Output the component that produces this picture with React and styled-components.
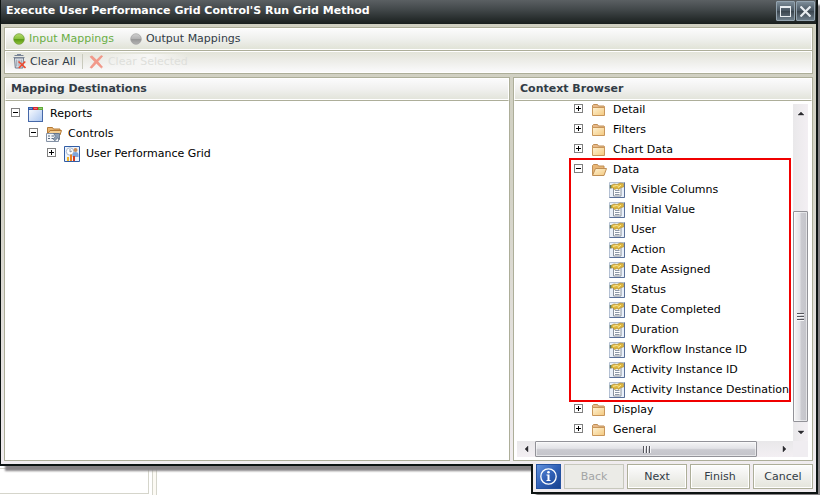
import React from "react";
import styled, { createGlobalStyle, css } from "styled-components";

const GlobalStyle = createGlobalStyle`
  *, *::before, *::after { box-sizing: border-box; }
  html, body { margin: 0; padding: 0; background: #fff; }
  body, button { font-family: "DejaVu Sans", Verdana, sans-serif; font-size: 11px; line-height: 16px; }
  button { margin: 0; padding: 0; border: 0; background: none; color: inherit; cursor: pointer; }
  svg { display: block; flex: none; }
`;

const line = "#adae99";
const ink = "#323c46";

const Page = styled.div`
  display: flex;
  flex-direction: column;
  height: 100vh;
  min-height: 420px;
  padding: 0 2px 1px 0;
  overflow: hidden;
`;

const Dialog = styled.main`
  flex: 1;
  min-height: 0;
  display: flex;
  flex-direction: column;
  border: solid #0c1312;
  border-width: 0 2px 2px 1px;
  background: linear-gradient(#cfcfc0, #d3d2c6 40%, #f0ecef);
  box-shadow: 5px 5px 2px #858284;
  z-index: 1;
`;

const TitleBar = styled.header`
  display: flex;
  align-items: center;
  gap: 1px;
  height: 24px;
  padding: 0 1px 2px 5px;
  background: linear-gradient(#5b6063, #42484a 40%, #191f1e);
`;

const Title = styled.h1`
  flex: 1;
  margin: 0;
  color: #fff;
  font-size: 11px;
  line-height: 16px;
  font-weight: bold;
  white-space: nowrap;
`;

const WindowButton = styled.button`
  display: grid;
  place-items: center;
  width: 19px;
  height: 20px;
  border: 1px solid #93a3af;
  border-radius: 1px;
  background: linear-gradient(#7c8c98, #46535e 50%, #3a454e 52%, #6e7e8a);
`;

const Body = styled.div`
  flex: 1;
  min-height: 0;
  display: flex;
  flex-direction: column;
  gap: 3px;
  padding: 3px;
`;

const Toolbars = styled.div`
  border: 1px solid ${line};
`;

const Toolbar = styled.div`
  display: flex;
  align-items: center;
  height: 22px;
  padding: 0 7px 1px;
  color: ${ink};
  border: 1px solid #fff;
  background: ${(p) => (p.$lower ? "linear-gradient(#e3e4d9, #eeeeea 50%, #fafafb)" : "linear-gradient(#fbfbfc, #eff0ed 50%, #e1e3d7)")};
  ${(p) => p.$lower && css`
    margin-top: 1px;
    box-shadow: 0 -1px ${line};
  `}
`;

const ToolButton = styled.button`
  display: flex;
  align-items: center;
  gap: 4px;
  margin-right: ${(p) => p.$after || 0}px;
  color: ${(p) => (p.$active ? "#6aae45" : ink)};
  white-space: nowrap;
  &:disabled { color: #dedfdb; background: linear-gradient(90deg, #f5f5f300, #f6f6f5 60%, #f5f5f300); cursor: default; }
`;

const Divider = styled.span`
  width: 1px;
  height: 15px;
  margin-right: 6px;
  background: #c9cabd;
`;

const Panels = styled.div`
  flex: 1;
  min-height: 0;
  display: grid;
  grid-template-columns: minmax(0, 1fr) 300px;
  gap: 3px;
`;

const Panel = styled.section`
  display: flex;
  flex-direction: column;
  min-width: 0;
  min-height: 0;
  border: 1px solid ${line};
  background: #fff;
`;

const PanelTitle = styled.h2`
  margin: 0;
  height: 23px;
  padding: 2px 5px;
  border: 1px solid #fff;
  box-shadow: inset 0 -1px #fff;
  border-bottom-color: ${line};
  background: linear-gradient(#fbfbfc, #f0f0ee 50%, #e1e3d9);
  color: ${ink};
  font-size: 11px;
  line-height: 16px;
  font-weight: bold;
`;

const Tree = styled.div`
  padding: ${(p) => (p.$scrolled ? 0 : 3)}px 0;
  margin-top: ${(p) => (p.$scrolled ? -4 : 0)}px;
`;

const Row = styled.div`
  display: flex;
  align-items: center;
  height: 20px;
  padding-left: ${(p) => p.$indent}px;
  white-space: nowrap;
  color: #000;
`;

const Toggle = styled.button`
  display: block;
  width: 9px;
  height: 12px;
  margin-right: 8px;
  padding-bottom: 3px;
`;

const Label = styled.span`
  padding-left: 6px;
`;

const Highlight = styled.div`
  margin: 0 4px 0 54px;
  outline: 2px solid #f00000;
  overflow: hidden;
`;

const ScrollArea = styled.div`
  flex: 1;
  min-height: 0;
  display: grid;
  grid-template: minmax(0, 1fr) 16px / minmax(0, 1fr) 15px;
  padding: 3px 4px 3px 3px;
`;

const Viewport = styled.div`
  overflow: hidden;
`;

const ScrollBar = styled.div`
  display: flex;
  flex-direction: ${(p) => (p.$vertical ? "column" : "row")};
  background: ${(p) => (p.$vertical ? "linear-gradient(90deg, #e9e8ea, #f3eff3)" : "linear-gradient(#e9e8ea, #f3eff3)")};
`;

const Arrow = styled.button`
  display: grid;
  place-items: center;
  flex: 0 0 17px;
`;

const Track = styled.span`
  flex: ${(p) => p.$part} 1 0;
`;

const Thumb = styled.span`
  flex: ${(p) => p.$part} 1 0;
  display: grid;
  place-items: center;
  border: 1px solid #929298;
  border-radius: 1px;
  box-shadow: inset 0 0 0 1px #ffffff88;
  background: linear-gradient(${(p) => (p.$vertical ? "90deg" : "180deg")}, #f4f4f5, #e3e3e7 45%, #cacad0 55%, #c4c4ca);
`;

const Corner = styled.span`
  background: #f0edf1;
`;

const BottomRow = styled.div`
  display: flex;
  align-items: stretch;
`;

const BackPane = styled.div`
  width: 149px;
  margin: 2px 3px 0 0;
  border: solid #d5d5cb;
  border-width: 1px 1px 1px 0;
`;

const BackSplitter = styled.div`
  width: 5px;
  margin-bottom: -1px;
  border: solid #d5d5cb;
  border-width: 0 1px;
  background: #fcfaf4;
`;

const Footer = styled.footer`
  display: flex;
  gap: 3px;
  margin: -2px 0 0 auto;
  padding: 0 3px 3px;
  border: solid #0c1312;
  border-width: 0 2px 2px;
  background: #f0ecef;
  box-shadow: 5px 5px 2px #858284;
  z-index: 2;
`;

const FooterButton = styled.button`
  width: 60px;
  height: 25px;
  border: 1px solid ${line};
  background: linear-gradient(#fdfdfd, #f0f0ed 50%, #e4e5db);
  box-shadow: inset 0 0 0 1px #fff;
  color: ${ink};
  &:disabled { color: #a2a4a5; background: #ebebe7; border-color: #c7c8bd; box-shadow: none; cursor: default; }
`;

const InfoButton = styled.button`
  display: grid;
  place-items: center;
  width: 25px;
  height: 25px;
  border: 1px solid #2452a0;
  background: linear-gradient(135deg, #6392dc, #3060b6 50%, #18428f);
`;

const Dot = ({ on }) => {
  const id = on ? "dot-on" : "dot-off";
  return (
    <svg width="12" height="12" viewBox="0 0 12 12">
      <defs>
        <linearGradient id={id} x2="0" y2="1">
          <stop offset="0" stopColor={on ? "#b4d96b" : "#d0d0d0"} />
          <stop offset=".45" stopColor={on ? "#8cc440" : "#b4b4b4"} />
          <stop offset=".55" stopColor={on ? "#5b9a15" : "#979797"} />
          <stop offset="1" stopColor={on ? "#92c43a" : "#b4b4b4"} />
        </linearGradient>
      </defs>
      <circle cx="6" cy="6" r="5.3" fill={`url(#${id})`} stroke={on ? "#6a9b34" : "#a0a0a0"} strokeWidth=".7" />
    </svg>
  );
};

const TrashIcon = () => (
  <svg width="13" height="15" viewBox="0 0 13 15">
    <path d="M1.500 4h9l-.600 10H2.300z" fill="#e5e9ee" stroke="#6e798a" />
    <path d="M3.800 5.500v7M6 5.500v7M8.200 5.500v7" stroke="#8c97a7" />
    <path d="M.5 3.500h11M1.500 1.500h9M4 .500h4" stroke="#7a8597" />
    <path d="M5.500 7.500l7 6.500M12.300 7.500l-6.500 6.500" stroke="#ee4a30" strokeWidth="1.600" />
  </svg>
);

const CrossIcon = () => (
  <svg width="15" height="14" viewBox="0 0 15 14">
    <path d="M1 1.8L3 .8l4.5 4.3L12 .6l1.700.600L9 6.600l4.600 5.500-1.300 1L7.400 8.300 2.800 13.200 1 12.400l4.700-5.700z" fill="#f29a8b" stroke="#ee8a79" strokeWidth=".5" />
  </svg>
);

const Sign = ({ open }) => (
  <svg width="9" height="9" viewBox="0 0 9 9" shapeRendering="crispEdges">
    <rect x=".5" y=".5" width="8" height="8" fill="#fff" stroke="#808080" />
    <path d={open ? "M2 4.5h5" : "M2 4.5h5M4.5 2v5"} stroke="#000" />
  </svg>
);

const ReportsIcon = () => (
  <svg width="16" height="16" viewBox="0 0 16 16">
    <defs>
      <linearGradient id="sheet" x2="1" y2="1">
        <stop offset="0" stopColor="#fff" />
        <stop offset="1" stopColor="#a9c5f0" />
      </linearGradient>
    </defs>
    <rect x=".5" y="1.500" width="14" height="14" fill="url(#sheet)" stroke="#4668a8" />
    <path d="M0 1h5v3H0z" fill="#2d5aa8" />
    <path d="M5 1h5v3H5z" fill="#d8242c" />
    <path d="M10 1h5v3h-5z" fill="#5eaa35" />
    <path d="M1 2.500h3M6 2.500h3M11 2.500h3" stroke="#fff" strokeOpacity=".35" />
  </svg>
);

const ControlsIcon = () => (
  <svg width="16" height="16" viewBox="0 0 16 16">
    <path d="M1.500 12V1.500h5l1 1.500H14v3" fill="#e9b570" stroke="#b47a36" />
    <path d="M1.500 8L4 4.500h11.500L14 9" fill="#f5cf92" stroke="#b47a36" />
    <path d="M.5 7.500h12v8H.5z" fill="#f4f6f9" stroke="#8492a6" />
    <path d="M2 10h2M2 12.500h2M5.500 10h3M5.500 12.500h2" stroke="#56687f" strokeWidth="1.200" />
    <path d="M7.500 7.500h6v6l-2-1.600-2.600 2.900-1.700-1.700 2.600-2.800z" fill="#8ea0b6" stroke="#5c6c82" strokeWidth=".8" />
  </svg>
);

const GridIcon = () => (
  <svg width="16" height="16" viewBox="0 0 16 16">
    <path d="M.5.5h15v15H.5z" fill="#edf3fc" stroke="#315da5" />
    <circle cx="6" cy="5.500" r="3.700" fill="#fff" stroke="#a9b9cf" />
    <path d="M6 3v3l2-1" fill="none" stroke="#6b7d99" strokeWidth=".8" />
    <circle cx="11.500" cy="4" r="2" fill="#c98d59" />
    <path d="M8.500 9q0-3 3-3t3 3v2h-6z" fill="#7fa6dd" />
    <path d="M3 11h2v4H3z" fill="#f0b429" />
    <path d="M6 8.500h2V15H6z" fill="#e98023" />
    <path d="M9 10h2v5H9z" fill="#d33c21" />
  </svg>
);

const FolderIcon = ({ open }) => (
  <svg width="16" height="16" viewBox="0 0 16 16">
    <defs>
      <linearGradient id="folder" x2="1" y2="1">
        <stop offset="0" stopColor="#fff3d4" />
        <stop offset="1" stopColor="#f3c87e" />
      </linearGradient>
    </defs>
    {open ? (
      <>
        <path d="M1.500 13V3.500l1-1h4l1 1.500h5.500v4" fill="#e9b777" stroke="#c08f55" />
        <path d="M1.500 13.500L4.500 6.500h11l-2.500 7z" fill="url(#folder)" stroke="#c08f55" />
      </>
    ) : (
      <>
        <path d="M1.500 12.500v-9l1-1h4l1 1.500H13l.5.5v8z" fill="#e7b98a" stroke="#c08f55" />
        <path d="M1.500 5.500h12v8h-12z" fill="url(#folder)" stroke="#c9965a" />
      </>
    )}
  </svg>
);

const PropertyIcon = () => (
  <svg width="16" height="16" viewBox="0 0 16 16">
    <path d="M.5.500h15v15H.5z" fill="#eaf0f9" stroke="#b4c0d3" />
    <path d="M.5 15.500h15V.5" fill="none" stroke="#5a7099" />
    <path d="M4.500 5.500h7.500v8.500h-7.500z" fill="#fdfdfe" stroke="#8a929e" />
    <path d="M6 8.500h4.500M6 10.500h4.500M6 12.500h4.500" stroke="#707d92" strokeWidth=".8" />
    <path d="M2 3.500L5 2l3 .500L11 1l3.500.500V5l-2.500.500-2 2L8 6.500 5.500 7.500 4 5.800 2 6z" fill="#dcb540" stroke="#a5842c" strokeWidth=".6" />
    <path d="M4 4.300l3.500-.800 2 .500M9 5.500l3-2.300" fill="none" stroke="#fff0a0" strokeWidth=".9" />
    <path d="M1.500 3v3.500" stroke="#5c7d58" strokeWidth="1.400" />
  </svg>
);

const arrowPaths = {
  up: "M1 6l3-3 3 3z",
  down: "M1 2h6L4 5z",
  left: "M6 1v6L3 4z",
  right: "M2 1l3 3-3 3z",
};

const ArrowIcon = ({ to }) => (
  <svg width="8" height="8" viewBox="0 0 8 8">
    <path d={arrowPaths[to]} fill="#2c2c30" stroke="#2c2c30" strokeWidth=".4" />
  </svg>
);

const GripIcon = ({ vertical }) => (
  <svg width="9" height="9" viewBox="0 0 9 9" shapeRendering="crispEdges">
    <path d={vertical ? "M1 1.500h7M1 4.500h7M1 7.500h7" : "M1.500 1v7M4.500 1v7M7.500 1v7"} stroke="#55555c" />
    <path d={vertical ? "M1 2.500h7M1 5.500h7M1 8.500h7" : "M2.500 1v7M5.500 1v7M8.500 1v7"} stroke="#f6f6f8" />
  </svg>
);

const Scroll = ({ vertical, before, thumb, after }) => (
  <ScrollBar $vertical={vertical}>
    <Arrow aria-label={vertical ? "Scroll up" : "Scroll left"}><ArrowIcon to={vertical ? "up" : "left"} /></Arrow>
    <Track $part={before} />
    <Thumb $part={thumb} $vertical={vertical}><GripIcon vertical={vertical} /></Thumb>
    <Track $part={after} />
    <Arrow aria-label={vertical ? "Scroll down" : "Scroll right"}><ArrowIcon to={vertical ? "down" : "right"} /></Arrow>
  </ScrollBar>
);

const Node = ({ indent, open, leaf, icon, children }) => (
  <Row $indent={indent} role="treeitem" aria-expanded={leaf ? undefined : Boolean(open)}>
    {!leaf && (
      <Toggle aria-label={`${open ? "Collapse" : "Expand"} ${children}`}><Sign open={open} /></Toggle>
    )}
    {icon}
    <Label>{children}</Label>
  </Row>
);

const fields = [
  "Visible Columns", "Initial Value", "User", "Action", "Date Assigned", "Status",
  "Date Completed", "Duration", "Workflow Instance ID", "Activity Instance ID",
  "Activity Instance Destination",
];

export default function App() {
  return (
    <Page>
      <GlobalStyle />
      <Dialog>
        <TitleBar>
          <Title>Execute User Performance Grid Control'S Run Grid Method</Title>
          <WindowButton aria-label="Maximize">
            <svg width="11" height="11" viewBox="0 0 11 11" shapeRendering="crispEdges">
              <path d="M.5 1h10v9.500H.5z" fill="none" stroke="#e8edf0" />
              <path d="M0 1h11" stroke="#e8edf0" strokeWidth="2" />
            </svg>
          </WindowButton>
          <WindowButton aria-label="Close">
            <svg width="11" height="11" viewBox="0 0 11 11">
              <path d="M.5.500l10 10M10.500.500l-10 10" stroke="#e8edf0" strokeWidth="2.200" />
            </svg>
          </WindowButton>
        </TitleBar>
        <Body>
          <Toolbars>
            <Toolbar>
              <ToolButton $active $after={16}><Dot on />Input Mappings</ToolButton>
              <ToolButton><Dot />Output Mappings</ToolButton>
            </Toolbar>
            <Toolbar $lower>
              <ToolButton $after={6}><TrashIcon />Clear All</ToolButton>
              <Divider />
              <ToolButton disabled><CrossIcon />Clear Selected</ToolButton>
            </Toolbar>
          </Toolbars>
          <Panels>
            <Panel>
              <PanelTitle>Mapping Destinations</PanelTitle>
              <Tree role="tree">
                <Node indent={6} open icon={<ReportsIcon />}>Reports</Node>
                <Node indent={24} open icon={<ControlsIcon />}>Controls</Node>
                <Node indent={42} icon={<GridIcon />}>User Performance Grid</Node>
              </Tree>
            </Panel>
            <Panel>
              <PanelTitle>Context Browser</PanelTitle>
              <ScrollArea>
                <Viewport>
                  <Tree role="tree" $scrolled>
                    {["Detail", "Filters", "Chart Data"].map((name) => (
                      <Node key={name} indent={57} icon={<FolderIcon />}>{name}</Node>
                    ))}
                    <Highlight>
                      <Node indent={3} open icon={<FolderIcon open />}>Data</Node>
                      {fields.map((name) => (
                        <Node key={name} indent={38} leaf icon={<PropertyIcon />}>{name}</Node>
                      ))}
                    </Highlight>
                    {["Display", "General"].map((name) => (
                      <Node key={name} indent={57} icon={<FolderIcon />}>{name}</Node>
                    ))}
                  </Tree>
                </Viewport>
                <Scroll vertical before={91} thumb={210} after={2} />
                <Scroll before={1} thumb={222} after={19} />
                <Corner />
              </ScrollArea>
            </Panel>
          </Panels>
        </Body>
      </Dialog>
      <BottomRow>
        <BackPane />
        <BackSplitter />
        <Footer>
          <InfoButton aria-label="Information">
            <svg width="19" height="19" viewBox="0 0 19 19">
              <circle cx="9.500" cy="9.500" r="7.700" fill="none" stroke="#fff" strokeWidth="1.300" />
              <circle cx="9.500" cy="5.300" r="1.300" fill="#fff" />
              <path d="M7.500 7.500h3V13h1v1h-4v-1h1V8.500h-1z" fill="#fff" />
            </svg>
          </InfoButton>
          <FooterButton disabled>Back</FooterButton>
          <FooterButton>Next</FooterButton>
          <FooterButton>Finish</FooterButton>
          <FooterButton>Cancel</FooterButton>
        </Footer>
      </BottomRow>
    </Page>
  );
}
